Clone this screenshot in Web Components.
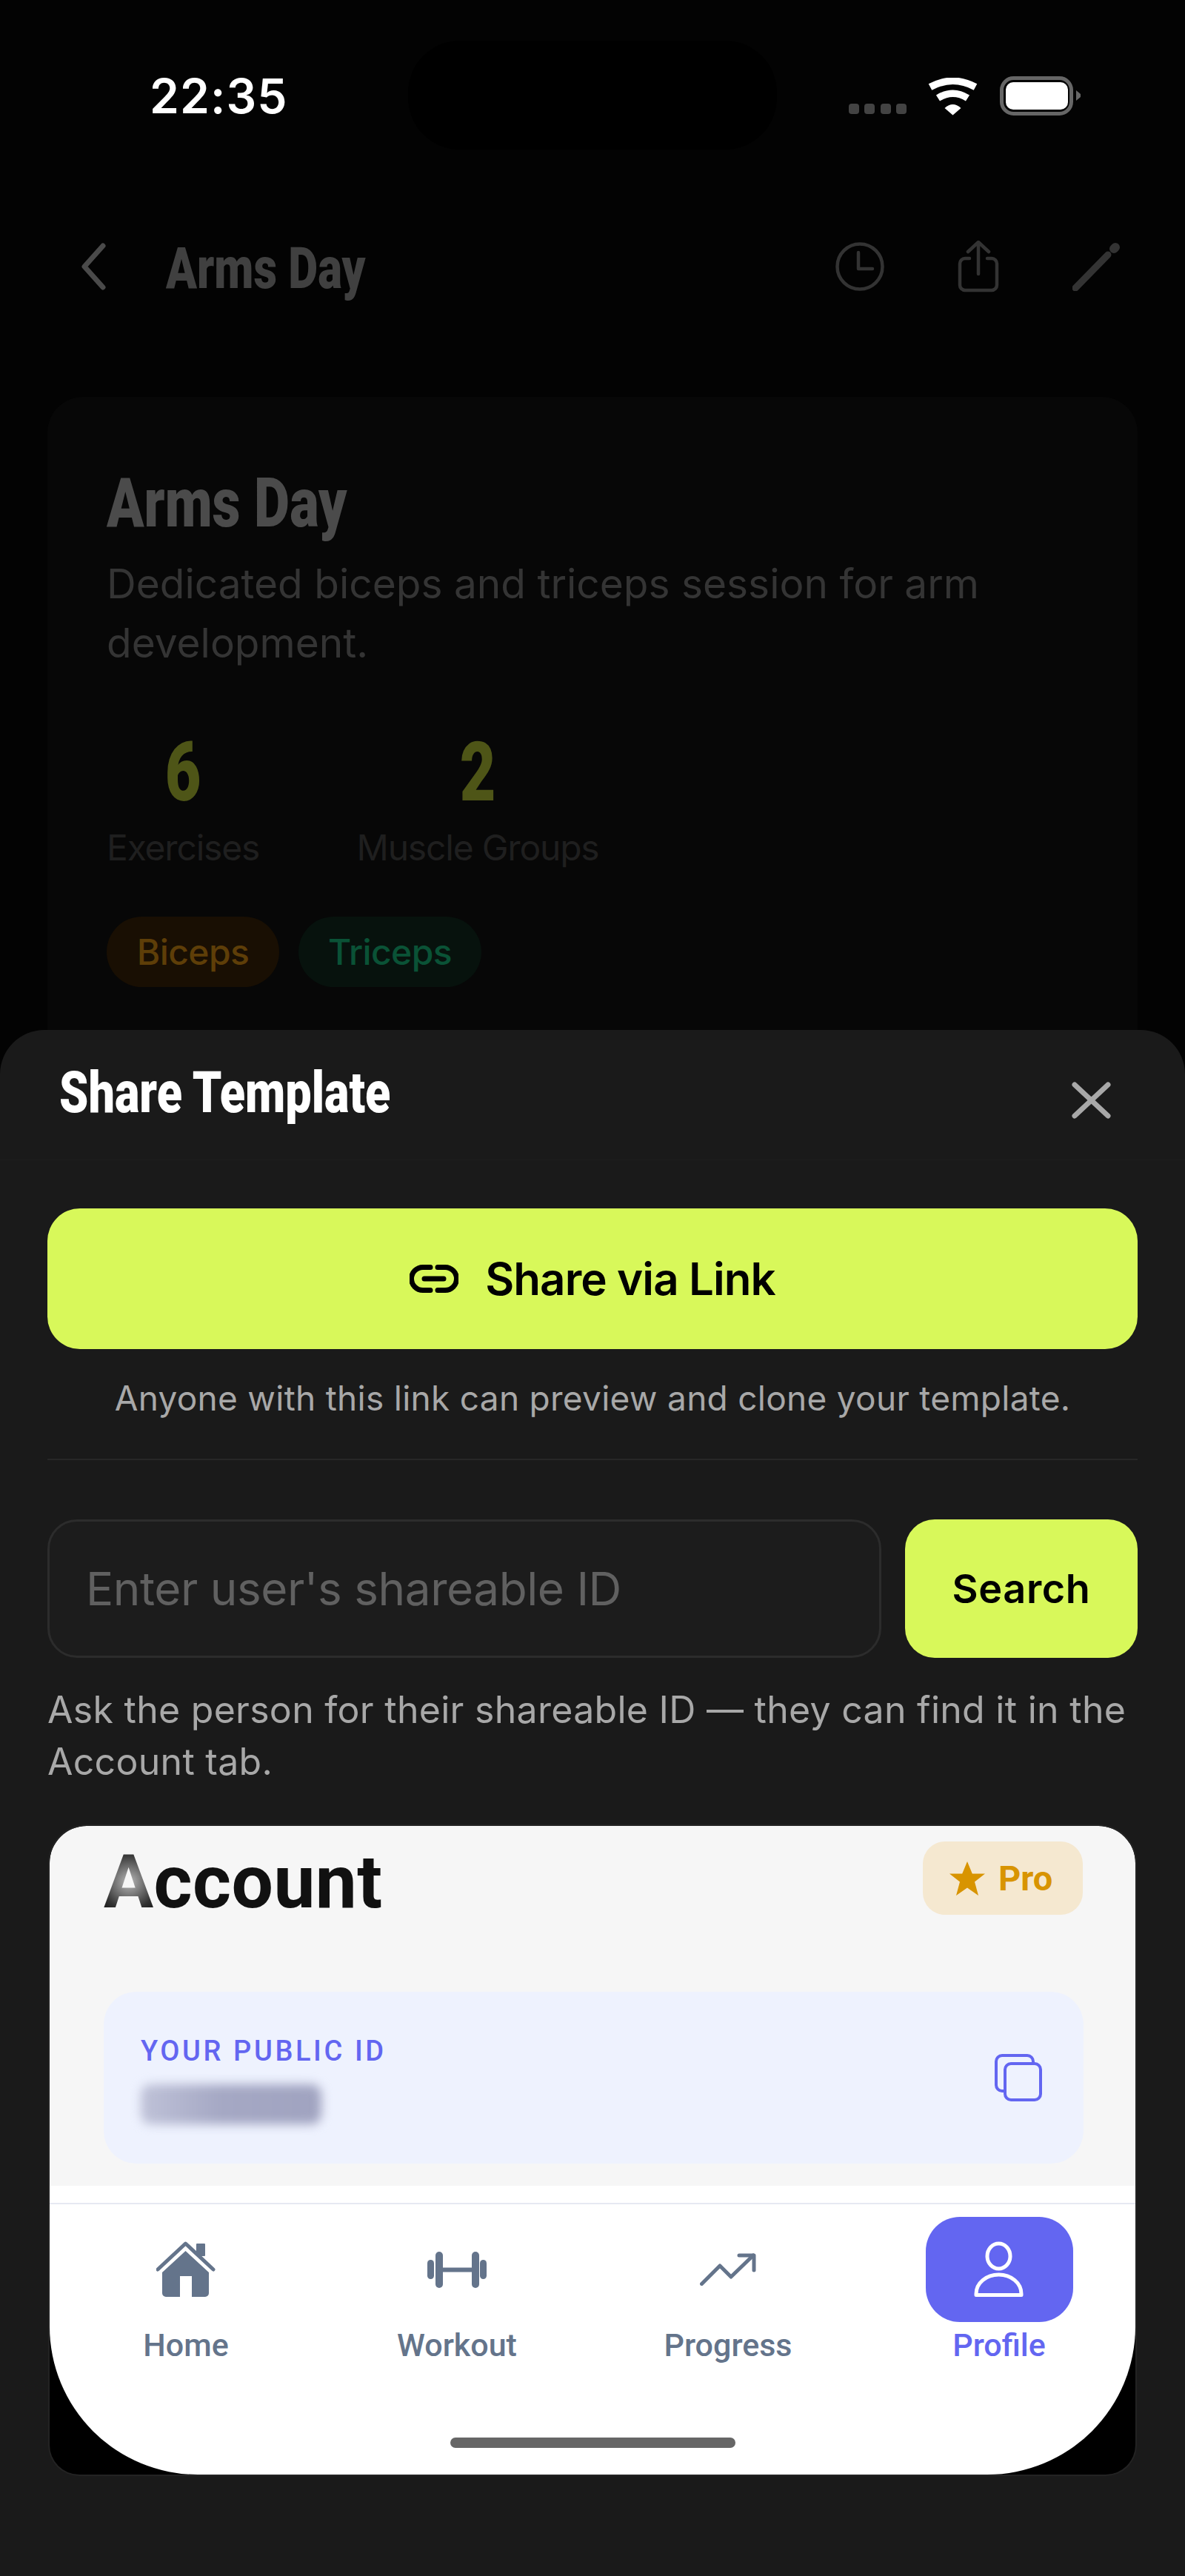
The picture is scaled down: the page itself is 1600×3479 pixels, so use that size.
<!DOCTYPE html>
<html lang="en">
<head>
<meta charset="utf-8">
<title>Share Template</title>
<style>
  html, body { margin: 0; padding: 0; background: #030303; }
  body { font-family: "Inter", "Noto Sans", sans-serif; }
</style>
</head>
<body>
<app-screen>
  <status-bar slot="page"></status-bar>
  <nav-header slot="page" heading="Arms Day"></nav-header>
  <template-card slot="page" heading="Arms Day">
    Dedicated biceps and triceps session for arm development.
    <stat-item slot="stats" value="6" style="width:206px">Exercises</stat-item>
    <stat-item slot="stats" value="2" style="width:330px">Muscle Groups</stat-item>
    <muscle-chip slot="chips" style="--chip-bg:#190f03;--chip-fg:#5e3e08;width:233px">Biceps</muscle-chip>
    <muscle-chip slot="chips" style="--chip-bg:#07120d;--chip-fg:#0a5236;width:247px">Triceps</muscle-chip>
  </template-card>
  <share-sheet slot="sheet" heading="Share Template">
    <account-preview>
      <tab-item slot="tabs" label="Home">
        <svg width="80" height="76" viewBox="0 0 80 76" fill="#64748b"><path d="M2 38 39.5 3 77 38" fill="none" stroke="#64748b" stroke-width="5" stroke-linecap="round" stroke-linejoin="round"/><rect x="54" y="3" width="12" height="17" rx="1"/><path d="M39.5 13 71 42v28a5 5 0 0 1-5 5H48V47H32v28H13a5 5 0 0 1-5-5V42z"/></svg>
      </tab-item>
      <tab-item slot="tabs" label="Workout">
        <svg width="80" height="49" viewBox="0 0 80 49" fill="#64748b"><rect x="0" y="11" width="9" height="26" rx="4.5"/><rect x="11" y="0" width="10" height="49" rx="5"/><rect x="20" y="21.5" width="41" height="6"/><rect x="60" y="0" width="10" height="49" rx="5"/><rect x="71" y="11" width="9" height="26" rx="4.5"/></svg>
      </tab-item>
      <tab-item slot="tabs" label="Progress">
        <svg width="76" height="44" viewBox="0 0 76 44" fill="none" stroke="#64748b" stroke-width="5" stroke-linecap="round" stroke-linejoin="round"><path d="M2.5 41.5 27 17l15 15L72 3"/><path d="M53 3h20v20"/></svg>
      </tab-item>
      <tab-item slot="tabs" label="Profile" active>
        <svg width="72" height="76" viewBox="0 0 72 76" fill="none" stroke="#fff" stroke-width="5"><ellipse cx="35.5" cy="20" rx="15.5" ry="17"/><path d="M5 72.500V71c0-15 14-26 30.500-26S66 56 66 71v1.500z" stroke-linejoin="round"/></svg>
      </tab-item>
    </account-preview>
  </share-sheet>
</app-screen>

<script>
// small helper, every element here is just a template in an open shadow root
function register(name, html) {
  customElements.define(name, class extends HTMLElement {
    constructor() {
      super();
      const attrs = {};
      for (const a of this.attributes) attrs[a.name] = a.value;
      this.attachShadow({ mode: "open" }).innerHTML =
        typeof html === "function" ? html(attrs) : html;
    }
  });
}

// no condensed family is installed, so headings are Roboto Black squeezed
const heavy = `900 78px/100px "Roboto", sans-serif`;

register("app-screen", `
  <style>
    :host { display: block; position: relative; width: 1600px; height: 3479px; overflow: hidden; background: #030303; }
    .sheet { position: absolute; left: 0; right: 0; top: 1391px; bottom: 0; }
  </style>
  <slot name="page"></slot>
  <div class="sheet"><slot name="sheet"></slot></div>
`);

register("status-bar", `
  <style>
    :host { display: flex; align-items: flex-start; justify-content: space-between; position: relative; height: 220px; padding: 103px 140px 0 202px; box-sizing: border-box; }
    .time { color: #fff; font: 600 64px/53px "Inter", sans-serif; letter-spacing: 1.100px; }
    .island { position: absolute; left: 551px; top: 55px; width: 498px; height: 147px; border-radius: 70px; background: #000; }
    .icons { display: flex; align-items: flex-start; }
    .dots { display: flex; gap: 7.500px; margin: 37px 28px 0 0; }
    .dots i { width: 14px; height: 14px; border-radius: 4px; background: #434343; }
    .battery { display: block; margin-left: 29px; }
  </style>
  <span class="time">22:35</span>
  <div class="island"></div>
  <div class="icons">
    <div class="dots"><i></i><i></i><i></i><i></i></div>
    <svg width="69" height="52" viewBox="0 0 69 52" style="margin-top:2px" fill="#fff"><path d="M4 12.500Q34.500-4 65 12.500" fill="none" stroke="#fff" stroke-width="9.500"/><path d="M14.500 27.500Q34.500 15 54.500 27.500" fill="none" stroke="#fff" stroke-width="9.500"/><path d="M23.500 41Q34.500 31 45.500 41L34.500 50.500z"/></svg>
    <svg class="battery" width="110" height="54" viewBox="0 0 110 54"><rect x="2.500" y="2.500" width="94" height="48" rx="16" fill="none" stroke="#666" stroke-width="5"/><rect x="8" y="8" width="84" height="37" rx="10" fill="#fff"/><path d="M103 19l6 5v4l-6 5z" fill="#666"/></svg>
  </div>
`);

register("nav-header", a => `
  <style>
    :host { display: flex; align-items: center; height: 100px; margin-top: 90px; padding: 0 86px 0 110px; box-sizing: border-box; }
    h1 { margin: 6px 0 0 81px; flex: 1; color: #404040; font: ${heavy}; }
    h1 span { display: inline-block; transform: scaleX(.79); transform-origin: left; }
    svg { display: block; }
    .actions { display: flex; align-items: center; gap: 99px; }
  </style>
  <svg width="33" height="64" viewBox="0 0 33 64" fill="none" stroke="#4a4a4a" stroke-width="7" stroke-linecap="round" stroke-linejoin="round"><path d="M29 4 4 32l25 28"/></svg>
  <h1><span>${a.heading}</span></h1>
  <div class="actions">
    <svg width="66" height="66" viewBox="0 0 66 66" fill="none" stroke="#333" stroke-width="4.500" stroke-linecap="round" stroke-linejoin="round"><circle cx="33" cy="33" r="30.500"/><path d="M31 14v22h19"/></svg>
    <svg width="56" height="72" viewBox="0 0 56 72" fill="none" stroke="#333" stroke-width="4.500" stroke-linecap="round" stroke-linejoin="round"><path d="M16 25H10a7 7 0 0 0-7 7v29a7 7 0 0 0 7 7h36a7 7 0 0 0 7-7V32a7 7 0 0 0-7-7h-6"/><path d="M28 46V3M14 16 28 3l14 13"/></svg>
    <svg width="66" height="66" viewBox="0 0 66 66" fill="none" stroke="#333" stroke-linecap="round"><path d="M4 62 48 17" stroke-width="9"/><path d="M56 9l2-2" stroke-width="12"/></svg>
  </div>
`);

register("template-card", a => `
  <style>
    :host { display: block; margin: 126px 64px 0; height: 900px; padding: 94px 80px 0; box-sizing: border-box; background: #070707; border-radius: 48px; }
    h2 { margin: 0; color: #4b4b4b; font: 900 93px/100px "Roboto", sans-serif; }
    h2 span { display: inline-block; transform: scaleX(.798); transform-origin: left; }
    p { margin: 18px 0 0; width: 1240px; color: #343434; font: 400 55px/80px "Inter", sans-serif; }
    .stats { display: flex; gap: 130px; margin-top: 85px; }
    .chips { display: flex; gap: 26px; margin-top: 63px; }
  </style>
  <h2><span>${a.heading}</span></h2>
  <p><slot></slot></p>
  <div class="stats"><slot name="stats"></slot></div>
  <div class="chips"><slot name="chips"></slot></div>
`);

register("stat-item", a => `
  <style>
    :host { display: block; text-align: center; white-space: nowrap; }
    b { display: block; color: #4e5517; font: 900 112px/100px "Roboto", sans-serif; transform: scaleX(.75); }
    span { display: block; margin-top: 22px; color: #1f1f1f; font: 400 48px/60px "Inter", sans-serif; letter-spacing: -1.200px; }
  </style>
  <b>${a.value}</b>
  <span><slot></slot></span>
`);

register("muscle-chip", `
  <style>
    :host { display: block; height: 95px; border-radius: 48px; background: var(--chip-bg); color: var(--chip-fg); font: 500 48px/95px "Inter", sans-serif; letter-spacing: -.6px; text-align: center; }
  </style>
  <slot></slot>
`);

register("share-sheet", a => `
  <style>
    :host { display: block; height: 100%; background: #1a1a1a; border-radius: 60px 60px 0 0; color: #a8a8a8; }
    header { display: flex; justify-content: space-between; height: 176px; box-sizing: border-box; padding: 40px 100px 0 80px; border-bottom: 2px solid #1c1c1c; }
    h2 { margin: 0; color: #fff; font: 900 78px/90px "Roboto", sans-serif; }
    h2 span { display: inline-block; transform: scaleX(.807); transform-origin: left; }
    header svg { margin-top: 30px; }
    main { padding: 65px 64px 0; }
    .link { display: flex; align-items: center; justify-content: center; gap: 36px; height: 190px; border-radius: 44px; background: #d8f85a; color: #000; font: 600 60px/1 "Inter", sans-serif; letter-spacing: -.9px; }
    .caption { margin: 36px 0 0; text-align: center; font: 400 46px/60px "Inter", sans-serif; letter-spacing: .28px; }
    hr { margin: 52px 0 0; border: 0; height: 2px; background: #272727; }
    .row { display: flex; gap: 32px; margin-top: 80px; height: 187px; }
    .input { flex: 1; box-sizing: border-box; padding-left: 49px; border: 3px solid #2c2c2c; border-radius: 40px; background: #1c1c1c; color: #606060; font: 400 62px/181px "Inter", sans-serif; letter-spacing: -.45px; }
    .search { width: 314px; border-radius: 40px; background: #d8f85a; color: #000; font: 600 54px/187px "Inter", sans-serif; letter-spacing: .6px; text-align: center; }
    .hint { margin: 35px 0 52px; font: 400 50px/70px "Inter", sans-serif; letter-spacing: .28px; }
  </style>
  <header>
    <h2><span>${a.heading}</span></h2>
    <svg width="53" height="50" viewBox="0 0 53 50" fill="none" stroke="#a8a8a8" stroke-width="7" stroke-linecap="round"><path d="M4 4l45 42M49 4 4 46"/></svg>
  </header>
  <main>
    <div class="link">
      <svg width="66" height="38" viewBox="0 0 66 38" fill="none" stroke="#000" stroke-width="7" stroke-linecap="round"><path d="M28 3.500H18a15.500 15.500 0 0 0 0 31h10M38 3.500h10a15.500 15.500 0 0 1 0 31H38M20 19h26"/></svg>
      <span>Share via Link</span>
    </div>
    <p class="caption">Anyone with this link can preview and clone your template.</p>
    <hr>
    <div class="row">
      <div class="input">Enter user's shareable ID</div>
      <div class="search">Search</div>
    </div>
    <p class="hint">Ask the person for their shareable ID — they can find it in the Account tab.</p>
    <slot></slot>
  </main>
`);

register("account-preview", `
  <style>
    :host { display: block; width: 1466px; height: 876px; margin-left: 3px; background: #000; border-radius: 50px 50px 40px 40px; box-shadow: 0 0 0 2px #232323; overflow: hidden; font-family: "Roboto", sans-serif; }
    .top { height: 486px; background: #f6f6f6; border-radius: 50px 50px 0 0; }
    .head { display: flex; justify-content: space-between; align-items: flex-start; height: 224px; box-sizing: border-box; padding: 21px 71px 0 73px; }
    h1 { margin: 5px 0 0; color: #111; font: 700 100px/100px "Roboto", sans-serif; letter-spacing: .4px; }
    h1 span { background: radial-gradient(circle at 50% 50%, #b8b8b8 0, #333 55%, #111 80%); -webkit-background-clip: text; background-clip: text; color: transparent; }
    .pro { display: flex; align-items: center; gap: 18px; width: 216px; height: 99px; box-sizing: border-box; padding: 0 36px; border-radius: 30px; background: #f5e8d0; color: #d89400; font: 700 47px/1 "Roboto", sans-serif; }
    .id { display: flex; align-items: center; justify-content: space-between; width: 1323px; height: 232px; box-sizing: border-box; margin-left: 73px; padding: 0 56px 0 50px; border-radius: 44px; background: #eef2fe; }
    .label { margin-top: 6px; color: #6366f1; font: 500 38px/40px "Roboto", sans-serif; letter-spacing: 3.600px; }
    .masked { width: 244px; height: 54px; margin: 25px 0 0 0; border-radius: 14px; background: linear-gradient(90deg, #bfc2d8, #a5a8c4 45%, #a0a3c0); filter: blur(7px); }
    .gap { height: 23px; background: #fff; }
    .bar { height: 367px; box-sizing: border-box; border-top: 2px solid #e6e9f2; border-radius: 0 0 200px 200px; background: #fff; padding: 0 1px; }
    .tabs { display: grid; grid-template-columns: repeat(4, 1fr); padding-top: 17px; }
    .indicator { width: 385px; height: 14px; margin: 100px auto 0; border-radius: 7px; background: #666; }
  </style>
  <div class="top">
    <div class="head">
      <h1><span>A</span>ccount</h1>
      <div class="pro">
        <svg width="48" height="46" viewBox="0 0 48 46" fill="#d89400"><path d="M24 0l6.800 16.500H48L34 27.500 39 46 24 35.500 9 46l5-18.500L0 16.500h17.200z"/></svg>
        <span>Pro</span>
      </div>
    </div>
    <div class="id">
      <div>
        <div class="label">YOUR PUBLIC ID</div>
        <div class="masked"></div>
      </div>
      <svg width="64" height="64" viewBox="0 0 64 64" fill="none" stroke="#6366f1" stroke-width="4"><path d="M52 13V10a8 8 0 0 0-8-8H10a8 8 0 0 0-8 8v32a8 8 0 0 0 8 8h4"/><rect x="14" y="13" width="48" height="49" rx="8"/></svg>
    </div>
  </div>
  <div class="gap"></div>
  <div class="bar">
    <div class="tabs"><slot name="tabs"></slot></div>
    <div class="indicator"></div>
  </div>
`);

register("tab-item", a => `
  <style>
    :host { display: flex; flex-direction: column; align-items: center; }
    .pill { display: flex; align-items: center; justify-content: center; width: 199px; height: 142px; border-radius: 46px; }
    :host([active]) .pill { background: #6366f1; }
    span { margin-top: 6px; color: #64748b; font: 500 43px/50px "Roboto", sans-serif; }
    :host([active]) span { color: #6366f1; }
  </style>
  <div class="pill"><slot></slot></div>
  <span>${a.label}</span>
`);
</script>
</body>
</html>
